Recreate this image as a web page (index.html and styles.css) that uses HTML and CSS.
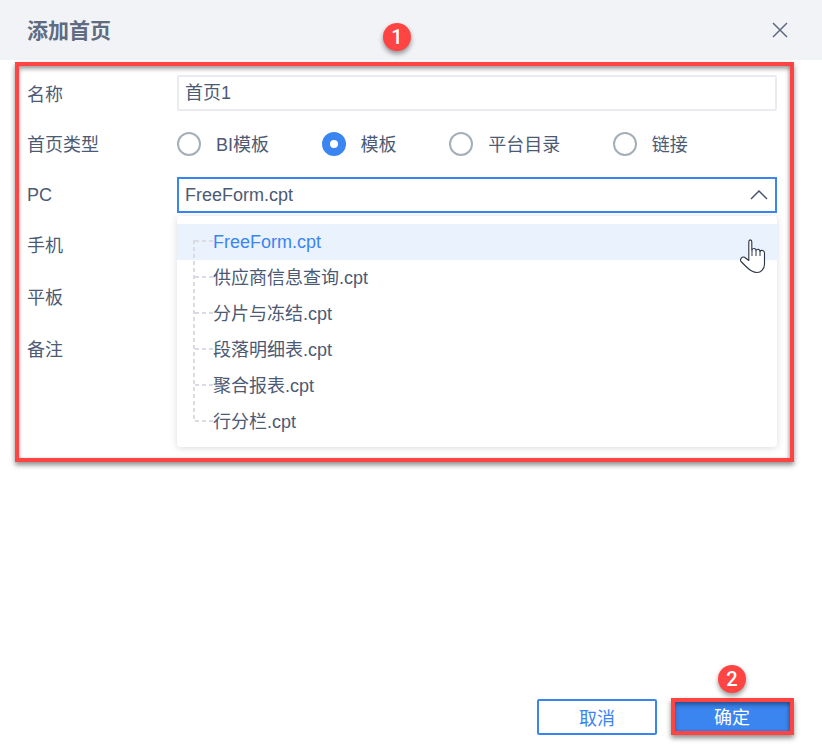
FILE: index.html
```html
<!DOCTYPE html>
<html lang="zh">
<head>
<meta charset="utf-8">
<title>添加首页</title>
<link rel="stylesheet" href="styles.css">
</head>
<body>
<div class="dialog">
  <header class="head">
    <h1 class="title">添加首页</h1>
    <svg class="close" width="18" height="18" viewBox="0 0 18 18"><path d="M2 2L16 16M16 2L2 16" fill="none" stroke="#5f6b80" stroke-width="1.5"/></svg>
  </header>
  <form class="form">
    <div class="row"><label class="label low-2">名称</label><div class="field input">首页1</div></div>
    <div class="row"><label class="label low-1">首页类型</label>
      <div class="radios">
        <span class="radio"><i class="dot"></i><span class="radio-text">BI模板</span></span>
        <span class="radio"><i class="dot on"></i><span class="radio-text">模板</span></span>
        <span class="radio"><i class="dot"></i><span class="radio-text">平台目录</span></span>
        <span class="radio"><i class="dot"></i><span class="radio-text">链接</span></span>
      </div>
    </div>
    <div class="row"><label class="label">PC</label>
      <div class="select-wrap">
        <div class="field input focus">FreeForm.cpt
          <svg class="chev" width="18" height="10" viewBox="0 0 18 10"><path d="M1 9L9 1L17 9" fill="none" stroke="#4a5670" stroke-width="1.5"/></svg>
        </div>
        <ul class="menu">
          <li class="item active">FreeForm.cpt</li>
          <li class="item">供应商信息查询.cpt</li>
          <li class="item">分片与冻结.cpt</li>
          <li class="item">段落明细表.cpt</li>
          <li class="item">聚合报表.cpt</li>
          <li class="item">行分栏.cpt</li>
        </ul>
      </div>
    </div>
    <div class="row"><label class="label">手机</label><div class="field input"></div></div>
    <div class="row"><label class="label low-1">平板</label><div class="field input"></div></div>
    <div class="row tall"><label class="label low-2">备注</label><div class="field area"></div></div>
  </form>
  <footer class="foot">
    <button class="btn ghost" type="button">取消</button>
    <button class="btn primary" type="button">确定</button>
  </footer>
  <div class="mark mark-form"></div>
  <div class="mark mark-btn"></div>
  <span class="badge badge-1">1</span>
  <span class="badge badge-2">2</span>
  <svg class="hand" width="30" height="36" viewBox="0 0 30 36"><path d="M10.800 21V4C10.800 1.200 13.800 1.200 13.800 4V12C15 9.800 18 10 18 12.500C19 10.600 22 11 22 13.500C23 11.800 26.500 12 26.500 15V26C26.500 31 23 34.500 19 34.500C14 34.500 11 31.500 8 28.500L3 23.500C1.500 21.500 4 18 6.500 19.300L10.800 22.500Z" fill="#fff" stroke="#2b3447" stroke-width="1.100" stroke-linejoin="round"/><path d="M14 12V18M18 12.500V18M22 13.500V18" fill="none" stroke="#2b3447" stroke-width="1"/></svg>
</div>
</body>
</html>
```

FILE: styles.css
```css
* { box-sizing: border-box; }
html, body { margin: 0; padding: 0; background: #fff; }
body {
  font-family: "Liberation Sans", "Noto Sans CJK SC", sans-serif;
  font-size: 18px;
  color: #4c5a74;
}
.dialog {
  position: relative;
  width: 822px;
  height: 752px;
  display: flex;
  flex-direction: column;
  overflow: hidden;
}
.head {
  height: 60px;
  flex: none;
  background: #f1f3f7;
  display: flex;
  align-items: center;
  justify-content: space-between;
  padding: 0 33px 0 27px;
}
.title {
  margin: 0 0 2px;
  font-size: 21px;
  font-weight: 700;
  color: #5f6b80;
}
.form {
  display: flex;
  flex-direction: column;
  gap: 15px;
  padding: 15px 45px 0 27px;
}
.row {
  display: flex;
  align-items: flex-start;
  min-height: 36px;
}
.label {
  width: 150px;
  height: 36px;
  flex: none;
  line-height: 36px;
}
.low-1 { line-height: 38px; }
.low-2 { line-height: 40px; }
.field { width: 600px; }
.input {
  height: 36px;
  border: 2px solid #e9ebf1;
  border-radius: 2px;
  padding: 0 6px;
  line-height: 32px;
  background: #fff;
}
.focus {
  position: relative;
  border-color: #3a85f0;
  border-radius: 0;
}
.chev { position: absolute; right: 7px; top: 11px; }
.area {
  height: 93px;
  border: 2px solid #e4e6ee;
  border-radius: 2px;
  width: 601px;
}
.radios {
  display: flex;
  align-items: center;
  gap: 52.6px;
  height: 36px;
}
.radio {
  display: flex;
  align-items: center;
  gap: 15px;
}
.radio-text { margin-bottom: 2px; }
.dot {
  display: block;
  width: 24px;
  height: 24px;
  border: 2px solid #a7aebb;
  border-radius: 50%;
}
.dot.on {
  border: 8px solid #3a85f0;
  background: #fff;
}
.select-wrap { position: relative; width: 600px; }
.menu {
  position: absolute;
  z-index: 2;
  top: 39px;
  left: 0;
  width: 600px;
  height: 231px;
  margin: 0;
  padding: 8px 0 0;
  list-style: none;
  background: #fff;
  border-radius: 4px;
  box-shadow: 0 1px 7px rgba(60, 70, 95, .2);
}
.menu::before {
  content: "";
  position: absolute;
  z-index: 1;
  left: 16px;
  top: 24px;
  width: 2px;
  height: 182px;
  background: repeating-linear-gradient(to bottom, #d9dce3 0 4px, transparent 4px 7px);
}
.item {
  position: relative;
  height: 36px;
  line-height: 36px;
  padding-left: 36px;
}
.item::before {
  content: "";
  position: absolute;
  left: 18px;
  top: 16px;
  width: 18px;
  height: 2px;
  background: repeating-linear-gradient(to right, #d9dce3 0 4px, transparent 4px 7px);
}
.item.active { background: #eaf2fd; color: #3a85f0; }
.foot {
  margin-top: auto;
  display: flex;
  justify-content: flex-end;
  gap: 16px;
  padding: 0 29px 17px;
}
.btn {
  width: 120px;
  height: 36px;
  border-radius: 2px;
  font: inherit;
  padding: 0;
}
.ghost { background: #fff; color: #3a85f0; border: 2px solid #3a85f0; }
.primary { background: #3a85f0; color: #fff; border: 0; padding: 0 2px 2px 0; }
.mark {
  position: absolute;
  z-index: 3;
  border: 4px solid #ff4444;
  box-shadow: 0 3px 5px rgba(0, 0, 0, .45), inset 0 3px 4px rgba(0, 0, 0, .35), inset -2px 0 3px rgba(0, 0, 0, .12);
  pointer-events: none;
}
.mark-form { left: 15px; top: 62px; width: 779px; height: 400px; }
.mark-btn { left: 671px; top: 698px; width: 123px; height: 37px; }
.badge {
  position: absolute;
  z-index: 4;
  width: 28px;
  height: 28px;
  border-radius: 50%;
  background: #ff4444;
  color: #fff;
  font-family: Roboto, "Liberation Sans", sans-serif;
  font-size: 20px;
  font-weight: 500;
  line-height: 28px;
  text-align: center;
  box-shadow: 0 3px 5px rgba(0, 0, 0, .4);
}
.badge-1 { left: 383px; top: 23px; }
.badge-2 { left: 718px; top: 665px; }
.hand { position: absolute; z-index: 4; left: 738px; top: 238px; }
```
